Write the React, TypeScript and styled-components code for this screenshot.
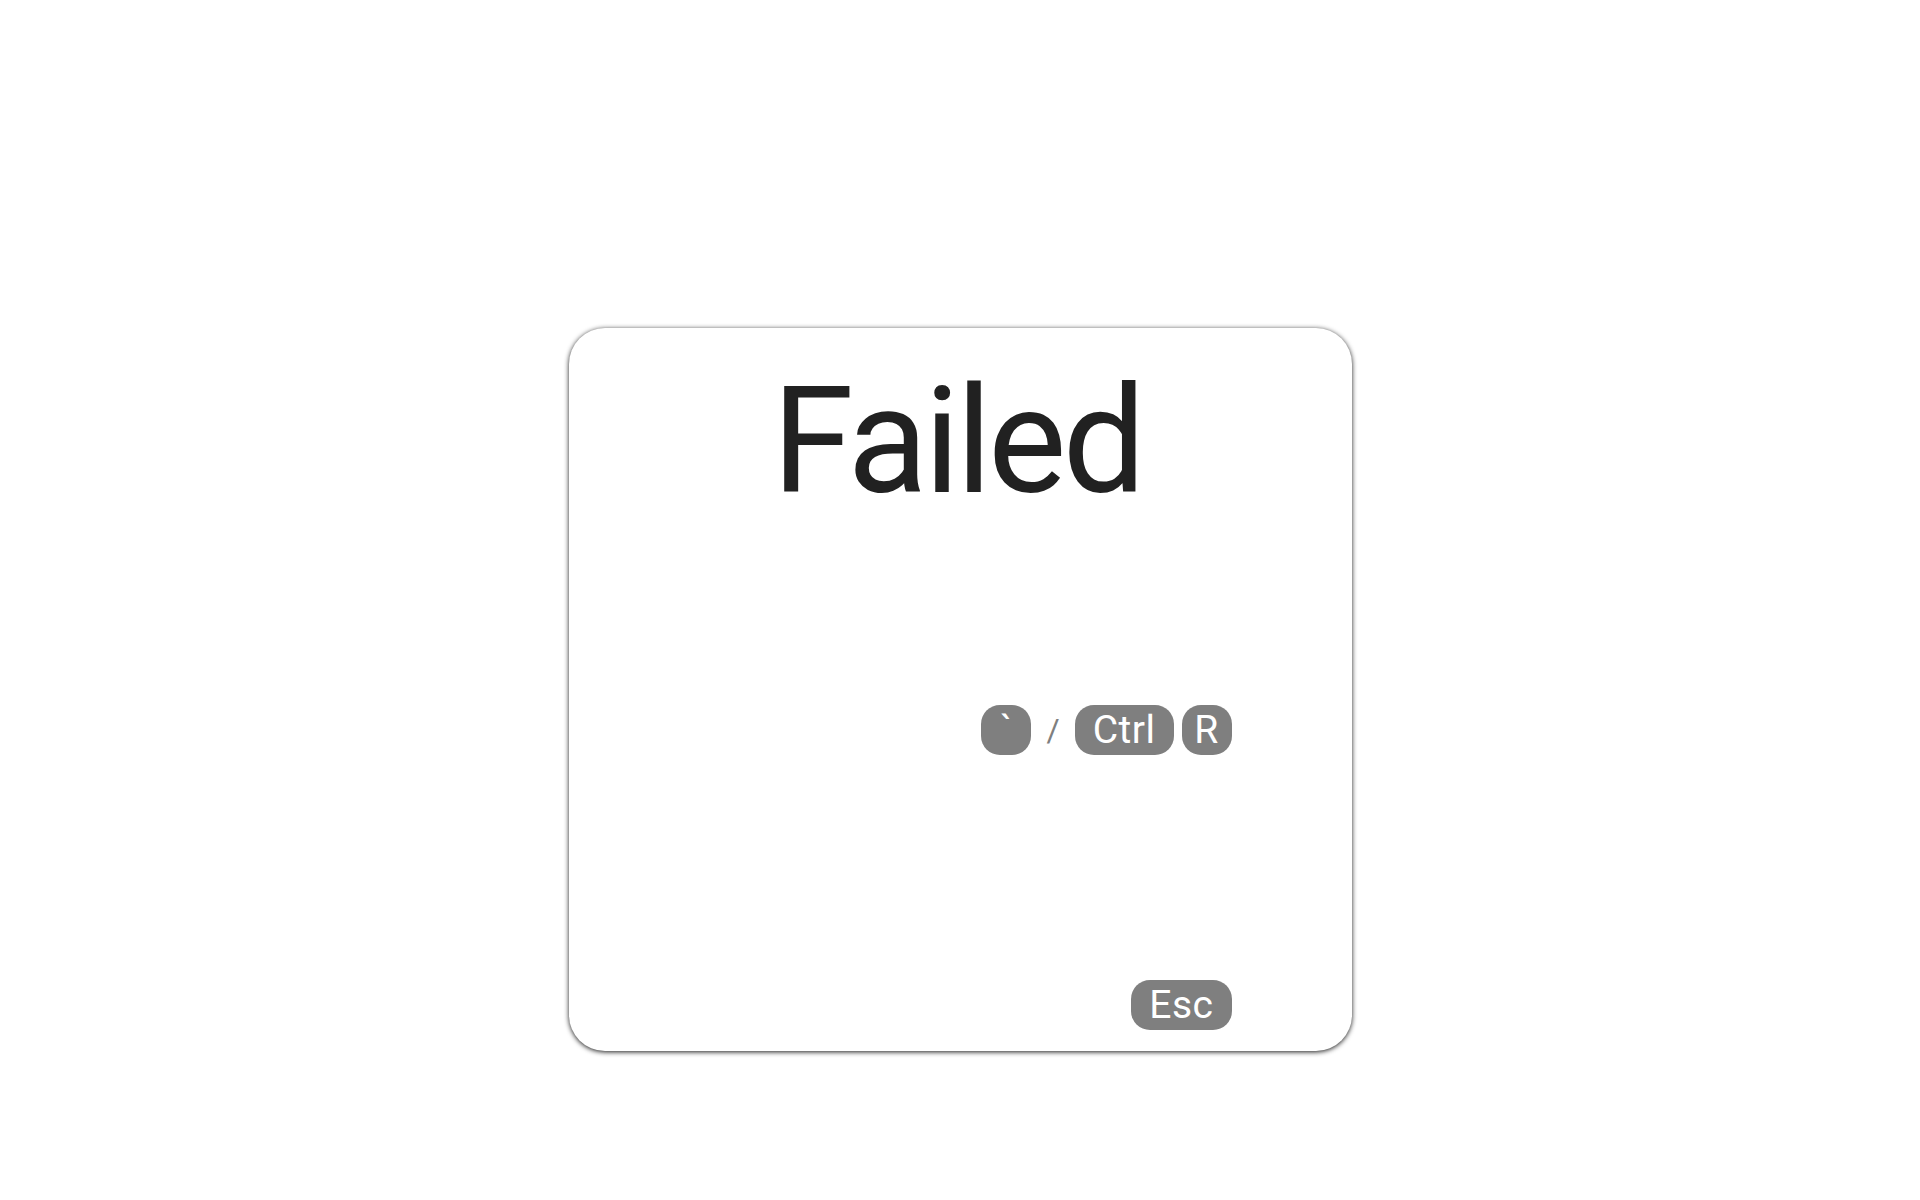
import styled, { createGlobalStyle } from 'styled-components';

const GlobalStyle = createGlobalStyle`
  body {
    margin: 0;
    background: #ffffff;
    font-family: Roboto, 'Liberation Sans', sans-serif;
  }
`;

const Page = styled.main`
  display: flex;
  justify-content: center;
  padding-top: 328px;
  min-height: 1200px;
  box-sizing: border-box;
`;

const Dialog = styled.section`
  width: 783px;
  height: 723px;
  box-sizing: border-box;
  padding: 40px 120px 21px;
  display: flex;
  flex-direction: column;
  background: #ffffff;
  border-radius: 36px;
  box-shadow: 0 1px 5px rgba(0, 0, 0, 0.9);
`;

const Title = styled.h1`
  margin: 0 0 0 -6px;
  font-size: 148px;
  line-height: 148px;
  font-weight: 400;
  letter-spacing: -4px;
  color: #212121;
  text-align: center;
`;

const KeyRow = styled.div<{ $top: number }>`
  display: flex;
  justify-content: flex-end;
  align-items: center;
  gap: 8px;
  margin-top: ${({ $top }) => $top}px;
`;

const Key = styled.kbd<{ $square?: boolean }>`
  display: inline-flex;
  justify-content: center;
  align-items: center;
  width: ${({ $square }) => ($square ? '50px' : 'auto')};
  height: 50px;
  padding: ${({ $square }) => ($square ? '0' : '0 18px')};
  box-sizing: border-box;
  border-radius: 19px;
  background: #7f7f7f;
  color: #ffffff;
  font-family: Roboto, 'Liberation Sans', sans-serif;
  font-size: 39px;
  letter-spacing: 0.5px;
  line-height: 50px;
`;

const Separator = styled.span`
  margin: 0 7px;
  color: #7f7f7f;
  font-size: 32px;
  font-weight: 400;
  line-height: 50px;
`;

const App = () => {
  return (
    <>
      <GlobalStyle />
      <Page>
        <Dialog>
          <Title>Failed</Title>
          <KeyRow $top={189}>
            <Key $square>`</Key>
            <Separator>/</Separator>
            <Key>Ctrl</Key>
            <Key $square>R</Key>
          </KeyRow>
          <KeyRow $top={225}>
            <Key>Esc</Key>
          </KeyRow>
        </Dialog>
      </Page>
    </>
  );
};

export default App;
